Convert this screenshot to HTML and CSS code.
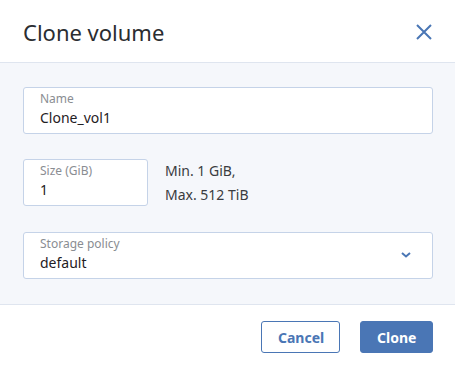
FILE: index.html
```html
<!DOCTYPE html>
<html lang="en">
<head>
  <meta charset="UTF-8" />
  <title>Clone volume</title>
  <link rel="stylesheet" href="styles.css">
</head>
<body>
  <div class="dialog">
    <div class="dialog-header">
      <div class="dialog-title">Clone volume</div>
      <button class="close-button" aria-label="Close">
        <svg width="16" height="16" viewBox="0 0 16 16">
          <path d="M1 1 L15 15 M15 1 L1 15" stroke="#4a76b5" stroke-width="2" fill="none"/>
        </svg>
      </button>
    </div>

    <div class="dialog-body">
      <div class="field">
        <div class="field-label">Name</div>
        <div class="field-value">Clone_vol1</div>
      </div>

      <div class="size-row">
        <div class="field field-size">
          <div class="field-label">Size (GiB)</div>
          <div class="field-value">1</div>
        </div>
        <div class="size-hint">Min. 1 GiB,<br>Max. 512 TiB</div>
      </div>

      <div class="field field-select">
        <div>
          <div class="field-label">Storage policy</div>
          <div class="field-value">default</div>
        </div>
        <svg class="chevron" width="10" height="6" viewBox="0 0 10 6">
          <path d="M1 1 L5 4.5 L9 1" stroke="#4a76b5" stroke-width="2" fill="none"/>
        </svg>
      </div>
    </div>

    <div class="dialog-footer">
      <button class="btn btn-secondary">Cancel</button>
      <button class="btn btn-primary">Clone</button>
    </div>
  </div>
</body>
</html>
```

FILE: styles.css
```css
body {
  margin: 0;
  padding: 0;
  font-family: 'Noto Sans', sans-serif;
  background: #fff;
  color: #222;
}

.dialog {
  width: 455px;
  height: 365px;
  display: flex;
  flex-direction: column;
}

.dialog-header {
  height: 63px;
  flex-shrink: 0;
  display: flex;
  align-items: center;
  justify-content: space-between;
  padding: 2px 23px 0 23px;
  box-sizing: border-box;
  border-bottom: 1px solid #dfe5ef;
}

.dialog-title {
  font-size: 22px;
  color: #2b2d31;
}

.close-button {
  background: none;
  border: none;
  padding: 0;
  width: 16px;
  height: 16px;
  cursor: pointer;
  display: flex;
}

.dialog-body {
  background: #f5f7fb;
  padding: 24px 22px 25px 23px;
  display: flex;
  flex-direction: column;
  gap: 25px;
}

.field {
  background: #fff;
  border: 1px solid #c5d3e8;
  border-radius: 3px;
  padding: 3px 16px 4px 16px;
  height: 47px;
  box-sizing: border-box;
}

.field-label {
  font-size: 12px;
  line-height: 16px;
  color: #8a8d92;
}

.field-value {
  font-size: 14px;
  line-height: 22px;
  color: #1f2023;
}

.size-row {
  display: flex;
  align-items: flex-start;
  gap: 17px;
}

.field-size {
  width: 125px;
}

.size-hint {
  font-size: 14px;
  line-height: 24px;
  color: #3a3c40;
}

.field-select {
  display: flex;
  align-items: center;
  justify-content: space-between;
  padding-right: 21px;
}

.dialog-footer {
  flex: 1;
  border-top: 1px solid #dfe5ef;
  display: flex;
  justify-content: flex-end;
  align-items: flex-start;
  gap: 20px;
  padding: 16px 22px 0 0;
}

.btn {
  height: 32px;
  box-sizing: border-box;
  border-radius: 3px;
  font-family: 'Noto Sans', sans-serif;
  font-size: 14px;
  font-weight: bold;
  padding: 0 16px;
  cursor: pointer;
}

.btn-secondary {
  background: #fff;
  color: #4a76b5;
  border: 1px solid #4a76b5;
  width: 79px;
}

.btn-primary {
  background: #4a76b5;
  color: #fff;
  border: 1px solid #4a76b5;
  width: 73px;
}
```
